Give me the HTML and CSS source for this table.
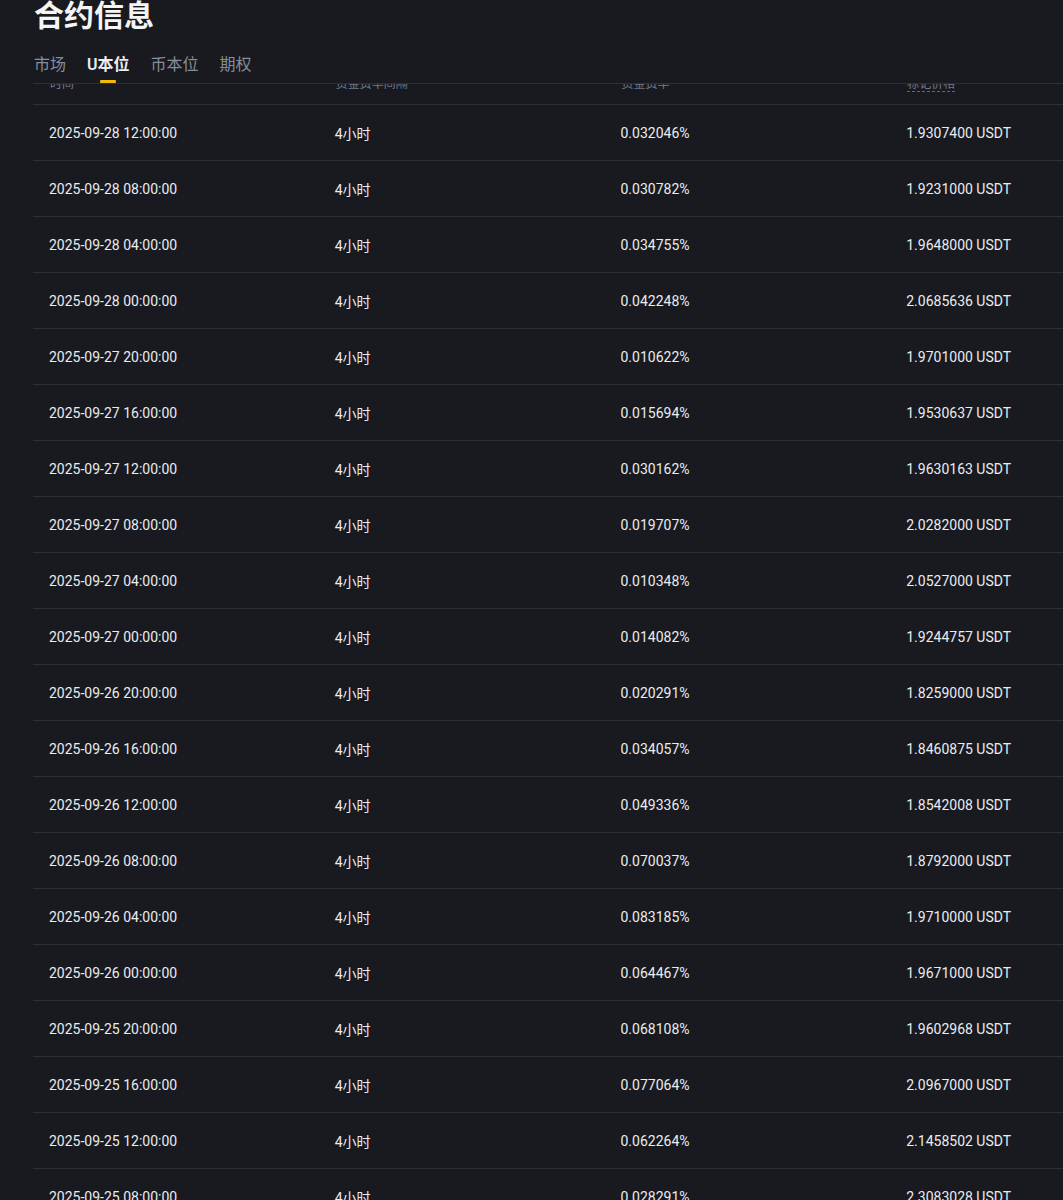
FILE: index.html
```html
<!DOCTYPE html>
<html lang="zh-CN">
<head>
<meta charset="utf-8">
<title>合约信息</title>
<link rel="stylesheet" href="styles.css">
</head>
<body>
<div class="page">
  <h1 class="title">合约信息</h1>
  <nav class="tabs">
    <span class="tab">市场</span>
    <span class="tab active">U本位</span>
    <span class="tab">币本位</span>
    <span class="tab">期权</span>
  </nav>
  <div class="table">
    <div class="thead">
      <div class="th"><span>时间</span></div>
      <div class="th"><span>资金费率间隔</span></div>
      <div class="th"><span>资金费率</span></div>
      <div class="th"><span class="dashed">标记价格</span></div>
    </div>
    <div class="row"><div>2025-09-28 12:00:00</div><div>4小时</div><div>0.032046%</div><div>1.9307400 USDT</div></div>
    <div class="row"><div>2025-09-28 08:00:00</div><div>4小时</div><div>0.030782%</div><div>1.9231000 USDT</div></div>
    <div class="row"><div>2025-09-28 04:00:00</div><div>4小时</div><div>0.034755%</div><div>1.9648000 USDT</div></div>
    <div class="row"><div>2025-09-28 00:00:00</div><div>4小时</div><div>0.042248%</div><div>2.0685636 USDT</div></div>
    <div class="row"><div>2025-09-27 20:00:00</div><div>4小时</div><div>0.010622%</div><div>1.9701000 USDT</div></div>
    <div class="row"><div>2025-09-27 16:00:00</div><div>4小时</div><div>0.015694%</div><div>1.9530637 USDT</div></div>
    <div class="row"><div>2025-09-27 12:00:00</div><div>4小时</div><div>0.030162%</div><div>1.9630163 USDT</div></div>
    <div class="row"><div>2025-09-27 08:00:00</div><div>4小时</div><div>0.019707%</div><div>2.0282000 USDT</div></div>
    <div class="row"><div>2025-09-27 04:00:00</div><div>4小时</div><div>0.010348%</div><div>2.0527000 USDT</div></div>
    <div class="row"><div>2025-09-27 00:00:00</div><div>4小时</div><div>0.014082%</div><div>1.9244757 USDT</div></div>
    <div class="row"><div>2025-09-26 20:00:00</div><div>4小时</div><div>0.020291%</div><div>1.8259000 USDT</div></div>
    <div class="row"><div>2025-09-26 16:00:00</div><div>4小时</div><div>0.034057%</div><div>1.8460875 USDT</div></div>
    <div class="row"><div>2025-09-26 12:00:00</div><div>4小时</div><div>0.049336%</div><div>1.8542008 USDT</div></div>
    <div class="row"><div>2025-09-26 08:00:00</div><div>4小时</div><div>0.070037%</div><div>1.8792000 USDT</div></div>
    <div class="row"><div>2025-09-26 04:00:00</div><div>4小时</div><div>0.083185%</div><div>1.9710000 USDT</div></div>
    <div class="row"><div>2025-09-26 00:00:00</div><div>4小时</div><div>0.064467%</div><div>1.9671000 USDT</div></div>
    <div class="row"><div>2025-09-25 20:00:00</div><div>4小时</div><div>0.068108%</div><div>1.9602968 USDT</div></div>
    <div class="row"><div>2025-09-25 16:00:00</div><div>4小时</div><div>0.077064%</div><div>2.0967000 USDT</div></div>
    <div class="row"><div>2025-09-25 12:00:00</div><div>4小时</div><div>0.062264%</div><div>2.1458502 USDT</div></div>
    <div class="row"><div>2025-09-25 08:00:00</div><div>4小时</div><div>0.028291%</div><div>2.3083028 USDT</div></div>
  </div>
</div>
</body>
</html>
```

FILE: styles.css
```css
html, body {
  margin: 0;
  padding: 0;
  background: #181a20;
  overflow: hidden;
}

body {
  font-family: Roboto, "Noto Sans CJK SC", sans-serif;
  color: #eaecef;
}

.page {
  padding-left: 33px;
  width: 1143px;
}

.title {
  margin: -2px 0 0 0;
  padding-left: 1px;
  font-size: 30px;
  line-height: 30px;
  font-weight: 700;
  color: #f5f5f5;
  font-family: "Noto Sans CJK SC", sans-serif;
}

.tabs {
  display: flex;
  gap: 21px;
  margin-top: 25px;
  padding-left: 1px;
  border-bottom: 1px solid #2b2f36;
}

.tab {
  display: flex;
  flex-direction: column;
  align-items: center;
  font-size: 16px;
  line-height: 24px;
  color: #848e9c;
  font-weight: 400;
}

.tab::after {
  content: "";
  display: block;
  width: 16px;
  height: 3px;
  margin-top: 3px;
  border-radius: 1px;
  background: transparent;
}

.tab.active {
  color: #eaecef;
  font-weight: 600;
}

.tab.active::after {
  background: #f0b90b;
}

.table {
  width: 1143px;
}

.thead {
  display: grid;
  grid-template-columns: repeat(4, 1fr);
  height: 20px;
  overflow: hidden;
  border-bottom: 1px solid #2b2f36;
}

.th {
  margin-top: -7px;
  padding-left: 17px;
  font-size: 12px;
  line-height: 14px;
  color: #707a8a;
}

.th span {
  display: inline-block;
}

.th .dashed {
  border-bottom: 1px dashed #5e6673;
}

.row {
  display: grid;
  grid-template-columns: repeat(4, 1fr);
  height: 55px;
  align-items: center;
  border-bottom: 1px solid #2b2f36;
  font-size: 14px;
}

.row > div {
  padding-left: 16px;
}
```
